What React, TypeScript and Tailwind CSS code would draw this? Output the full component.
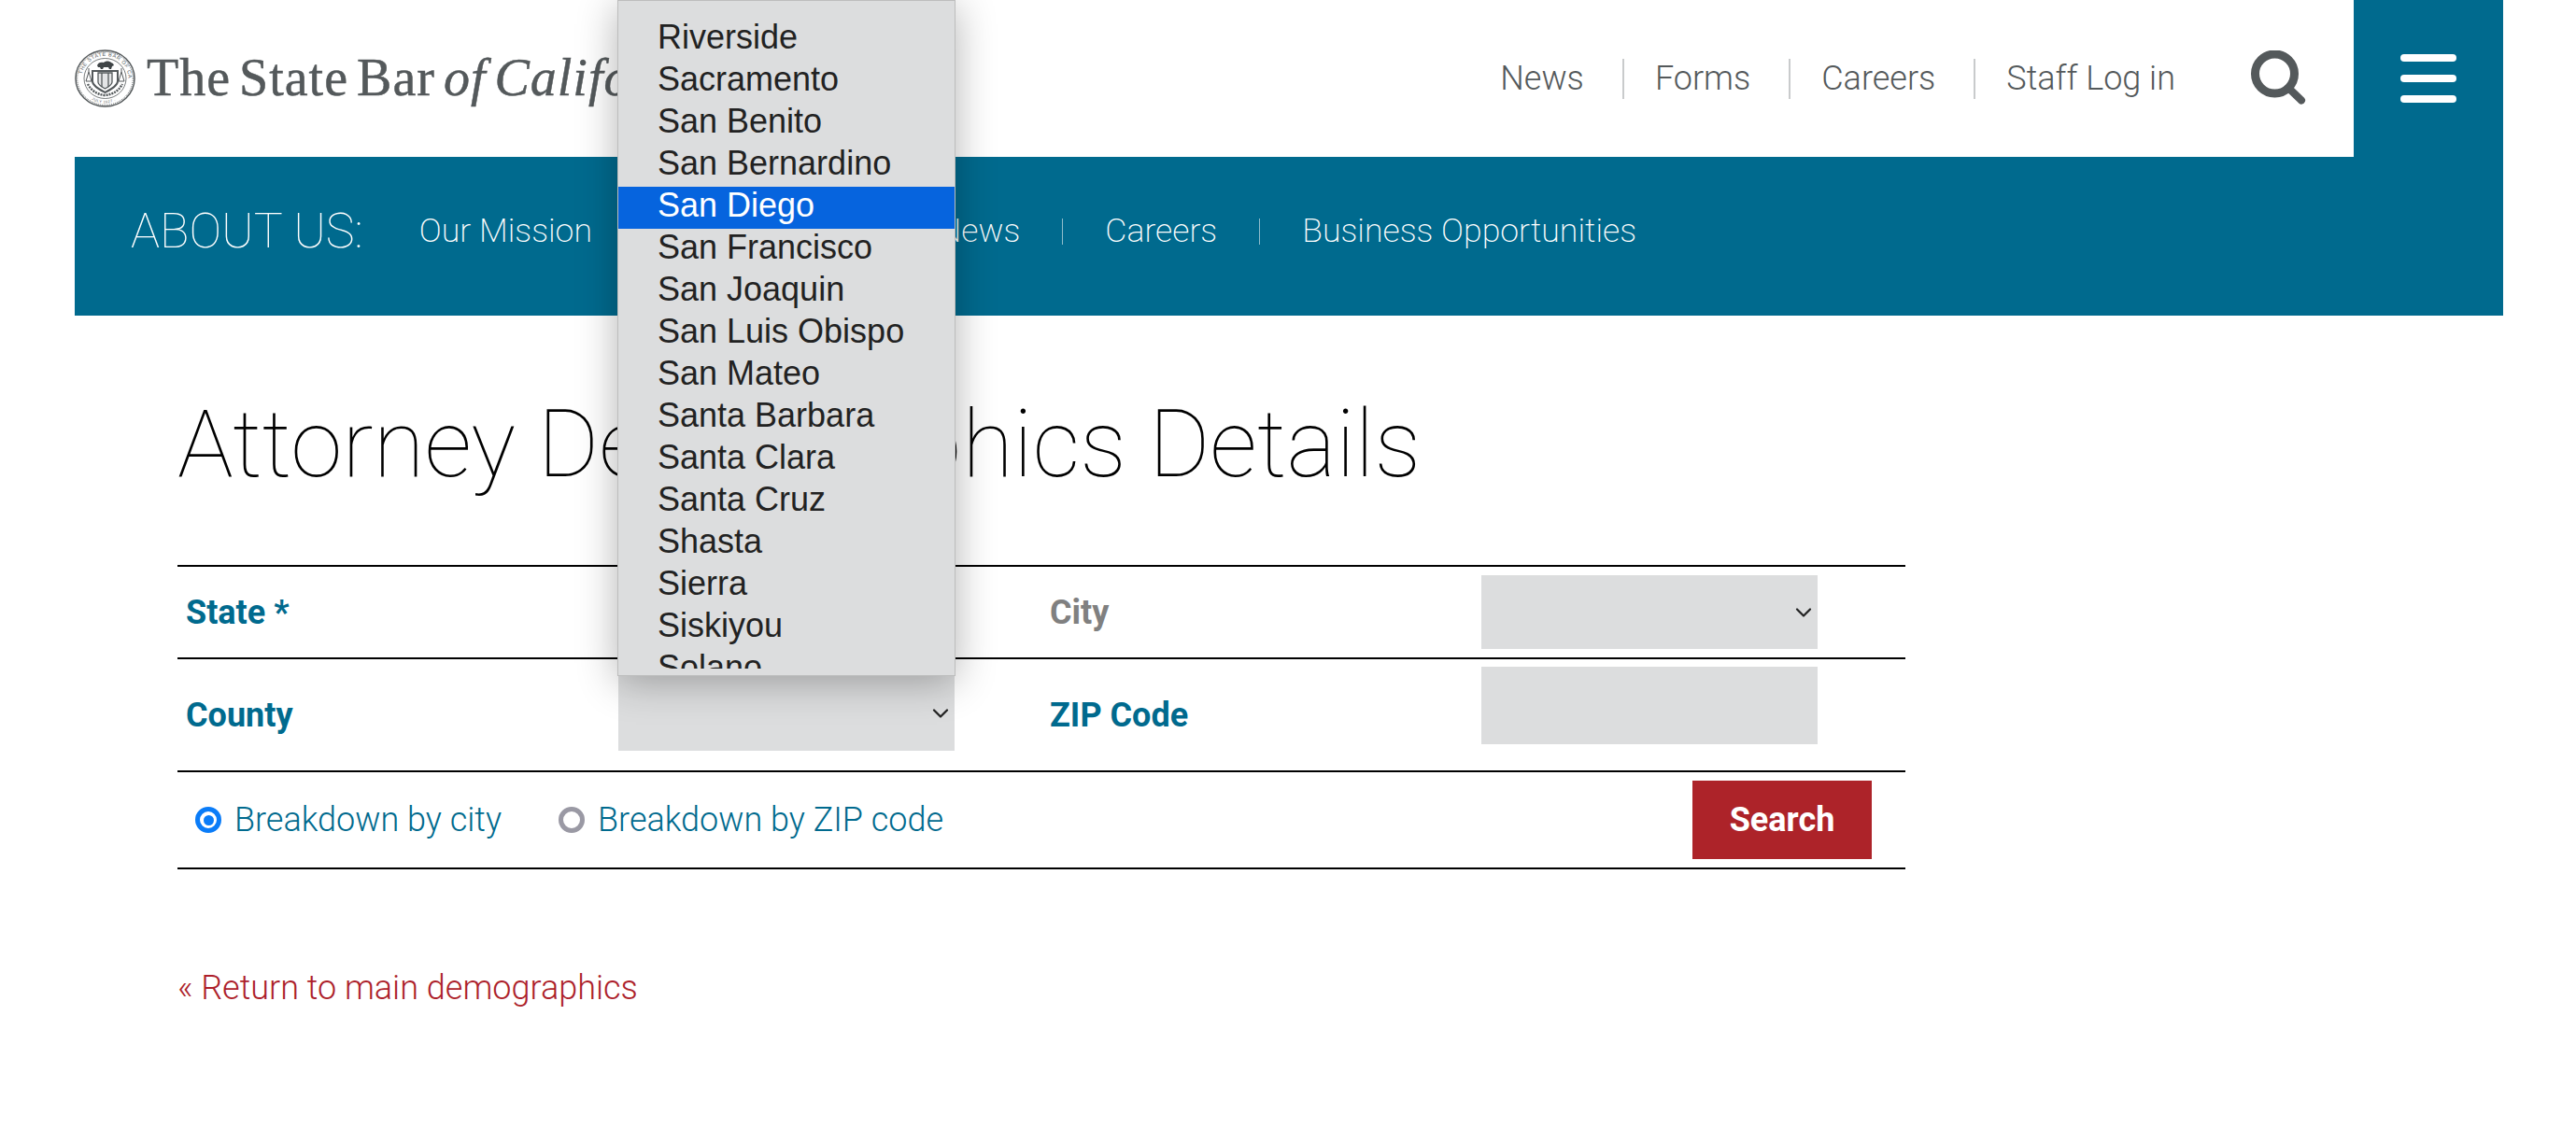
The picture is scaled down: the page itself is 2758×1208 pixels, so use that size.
import { ChevronDown } from "lucide-react";

const counties = [
  "Plumas",
  "Riverside",
  "Sacramento",
  "San Benito",
  "San Bernardino",
  "San Diego",
  "San Francisco",
  "San Joaquin",
  "San Luis Obispo",
  "San Mateo",
  "Santa Barbara",
  "Santa Clara",
  "Santa Cruz",
  "Shasta",
  "Sierra",
  "Siskiyou",
  "Solano",
  "Sonoma",
];

const Seal = () => (
  <svg width="65" height="62" viewBox="0 0 65 62" className="shrink-0">
    <defs>
      <path id="sealTop" d="M7.5 31a25 24 0 0 1 50 0" />
      <path id="sealBottom" d="M5 31a27.5 26.5 0 0 0 55 0" />
    </defs>
    <ellipse cx="32.5" cy="31" rx="31.5" ry="30" fill="#fff" stroke="#54595b" strokeWidth="1.5" />
    <ellipse cx="32.5" cy="31" rx="29.8" ry="28.4" fill="none" stroke="#54595b" strokeWidth="1" strokeDasharray="1 1" />
    <text fontFamily="Liberation Sans, sans-serif" fontSize="5.5" fill="#54595b" letterSpacing="0.6">
      <textPath href="#sealTop" startOffset="6%">THE STATE BAR OF CALIFORNIA</textPath>
    </text>
    <text fontFamily="Liberation Sans, sans-serif" fontSize="4" fill="#54595b" letterSpacing="0.5">
      <textPath href="#sealBottom" startOffset="28%">· JULY 1927 ·</textPath>
    </text>
    <ellipse cx="32.5" cy="31" rx="22.5" ry="21.5" fill="none" stroke="#54595b" strokeWidth="0.8" />
    <path d="M24 17c1-3 4-4 7-3 2-2 6-2 8 0l2 1 1 2-2 1-1 3h-2l-1-2h-5l-1 2h-2l-1-2h-2z" fill="#3f4446" />
    <path d="M19 23h27v11c0 5-8 9-13.500 12-5.500-3-13.500-7-13.500-12z" fill="#fff" stroke="#54595b" strokeWidth="2" />
    <path d="M25 25h15v10c0 3-4 5-7.500 7-3.500-2-7.500-4-7.500-7z" fill="#e4e5e6" stroke="#54595b" strokeWidth="1.3" />
    <path d="M29 25v15M36 25v15" stroke="#54595b" strokeWidth="1.3" />
    <path d="M15 24l-3 10h6zM50 24l-3 10h6zM15 20v4M50 20v4" fill="none" stroke="#54595b" strokeWidth="1" />
    <path d="M14 37c3 6 9 11 18.500 12 9.500-1 15.500-6 18.500-12" fill="none" stroke="#54595b" strokeWidth="2.4" strokeDasharray="2 1" />
  </svg>
);

const HeaderLink = ({ label, last }: { label: string; last?: boolean }) => (
  <div className="flex items-center">
    <span>{label}</span>
    {!last && <div className="mr-[33px] ml-[41px] h-[43px] w-[2px] bg-[#c9cbcc]"></div>}
  </div>
);

const NavLink = ({ label, last, width }: { label: string; last?: boolean; width?: string }) => (
  <div className="flex items-center">
    <span className={width}>{label}</span>
    {!last && <div className="mx-[45px] h-[28px] w-[1px] bg-[#8fbccb]"></div>}
  </div>
);

const Caret = () => <ChevronDown size={28} strokeWidth={1.9} className="text-[#222]" />;

const Radio = ({ label, checked }: { label: string; checked?: boolean }) => (
  <div className="flex items-center">
    {checked ? (
      <div className="flex h-[28px] w-[28px] items-center justify-center rounded-full border-[5px] border-[#0a7cf8] bg-white">
        <div className="h-[11px] w-[11px] rounded-full bg-[#0a7cf8]"></div>
      </div>
    ) : (
      <div className="h-[28px] w-[28px] rounded-full border-[5px] border-[#9a99a4] bg-white"></div>
    )}
    <span className="ml-[14px] font-light text-[#006a8e]">{label}</span>
  </div>
);

export default function App() {
  return (
    <div className="relative h-[1208px] w-[2758px] overflow-hidden bg-white font-['Roboto',sans-serif] text-[36px]">
      <div className="ml-[80px] w-[2600px]">
        <div className="flex h-[168px]">
          <div className="flex flex-1 items-center justify-between pr-[50px]">
            <div className="flex items-center">
              <Seal />
              <span className="ml-[12px] pb-[3px] font-['Liberation_Serif',serif] text-[56px] tracking-[1px] text-[#54595b] [-webkit-text-stroke:0.5px_#54595b] [word-spacing:-6px]">
                The State Bar <i>of California</i>
              </span>
            </div>
            <div className="flex items-center font-light text-[#54595b]">
              <HeaderLink label="News" />
              <HeaderLink label="Forms" />
              <HeaderLink label="Careers" />
              <HeaderLink label="Staff Log in" last />
              <svg width="60" height="60" viewBox="0 0 60 60" className="ml-[81px]">
                <circle cx="25.500" cy="25" r="21" fill="none" stroke="#54595b" strokeWidth="9" />
                <path d="M40 40l14 13.500" stroke="#54595b" strokeWidth="8" strokeLinecap="round" />
              </svg>
            </div>
          </div>
          <div className="flex w-[160px] flex-col items-center justify-center gap-[14px] bg-[#006a8e]">
            <div className="h-[8px] w-[60px] rounded bg-white"></div>
            <div className="h-[8px] w-[60px] rounded bg-white"></div>
            <div className="h-[8px] w-[60px] rounded bg-white"></div>
          </div>
        </div>

        <div className="flex h-[170px] items-center bg-[#006a8e] pb-[10px] pl-[60px] font-thin text-white">
          <span className="text-[52px]">ABOUT US:</span>
          <div className="ml-[60px] flex items-center text-[35.7px] font-extralight">
            <NavLink label="Our Mission" />
            <NavLink label="Who We Are" width="w-[188px]" />
            <NavLink label="News" />
            <NavLink label="Careers" />
            <NavLink label="Business Opportunities" last />
          </div>
        </div>
      </div>

      <div className="ml-[190px] w-[1850px]">
        <h1 className="mt-[73px] h-[130px] text-[100px] leading-[130px] font-thin text-black">
          Attorney Demographics Details
        </h1>

        <div className="mt-[64px] border-b-2 border-black">
          <div className="flex h-[99px] items-center border-t-2 border-black font-bold">
            <div className="w-[472px] pl-[9px] text-[#006a8e]">State *</div>
            <div className="w-[462px]"></div>
            <div className="w-[462px] text-[#808080]">City</div>
            <div className="flex h-[79px] w-[360px] items-center justify-end bg-[#dcddde] pr-px">
              <Caret />
            </div>
          </div>
          <div className="flex h-[121px] items-center border-t-2 border-black font-bold">
            <div className="w-[472px] pl-[9px] text-[#006a8e]">County</div>
            <div className="mt-[18px] flex h-[80px] w-[360px] items-center justify-end self-start bg-[#dcddde] pr-px">
              <Caret />
            </div>
            <div className="w-[102px]"></div>
            <div className="w-[462px] text-[#006a8e]">ZIP Code</div>
            <div className="mt-[8px] h-[83px] w-[360px] self-start bg-[#dcddde]"></div>
          </div>
          <div className="flex h-[104px] items-center justify-between border-t-2 border-black pr-[36px] pl-[19px]">
            <div className="flex items-center gap-[61px]">
              <Radio label="Breakdown by city" checked />
              <Radio label="Breakdown by ZIP code" />
            </div>
            <button className="h-[84px] w-[192px] bg-[#ad2329] font-bold text-white">Search</button>
          </div>
        </div>

        <div className="mt-[100px] font-light text-[#ad1f2b]">« Return to main demographics</div>
      </div>

      <div className="absolute top-0 left-[661px] h-[724px] w-[362px] border border-[#bdbdbd] bg-[#dcddde] shadow-[0_6px_40px_rgba(0,0,0,0.3)]">
        <div className="mt-[7px] h-[708px] overflow-hidden font-['Liberation_Sans',sans-serif] text-[36px] leading-[39px] text-[#222]">
          <div className="mt-[-33px]">
            {counties.map((c) => (
              <div key={c} className={c === "San Diego" ? "h-[45px] bg-[#0664de] pl-[42px] text-white" : "h-[45px] pl-[42px]"}>
                {c}
              </div>
            ))}
          </div>
        </div>
      </div>
    </div>
  );
}
